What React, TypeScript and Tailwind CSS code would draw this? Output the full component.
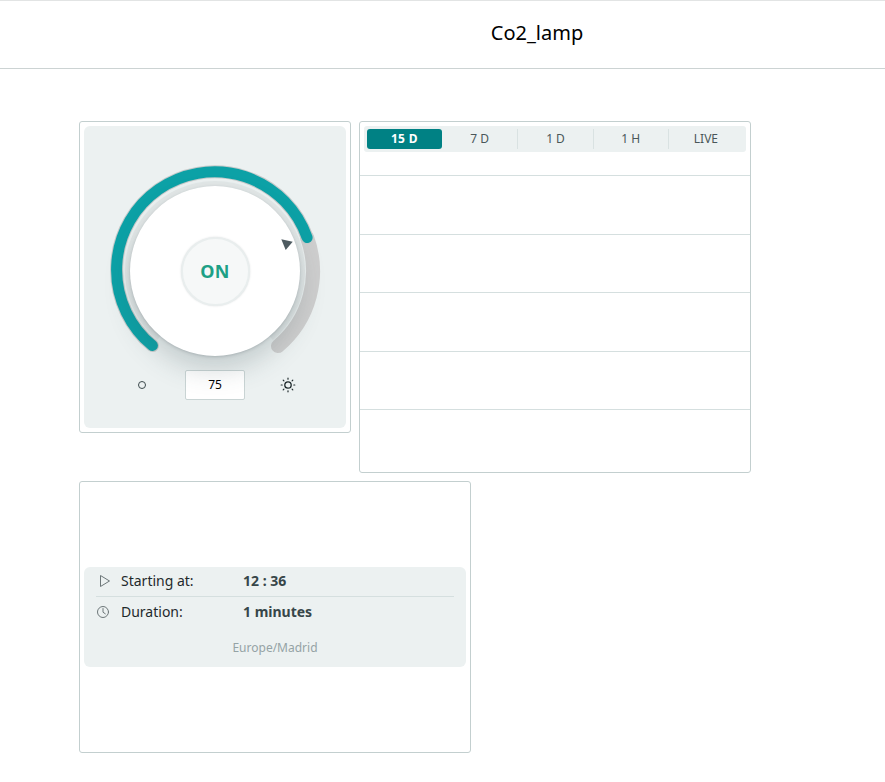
const ranges = ["15 D", "7 D", "1 D", "1 H", "LIVE"]

const Knob = () => {
    return (
        <div className="relative w-[214px] h-[206px]">
            <svg width="214" height="214" viewBox="0 0 214 214" className="absolute left-0 top-0" fill="none">
                <path d="M52 172.5A85.500 85.500 0 1 1 162 172.5" stroke="#e2e7e7" strokeWidth="9" />
                <path d="M199.1 73.5A98 98 0 0 1 170 182.1" stroke="#cecece" strokeWidth="14" strokeLinecap="round" />
                <path d="M44.4 181.6A98 98 0 1 1 199.1 73.5" stroke="#c6caca" strokeWidth="13" strokeLinecap="round" />
                <path d="M44.4 181.6A98 98 0 1 1 199.1 73.5" stroke="#0ca1a6" strokeWidth="11" strokeLinecap="round" />
            </svg>
            <div className="absolute left-[22px] top-[22px] w-[170px] h-[170px] rounded-full bg-white shadow-[0_1px_3px_rgba(70,85,90,0.25),0_14px_26px_rgba(60,80,85,0.22)] flex items-center justify-center">
                <div className="w-[69px] h-[69px] rounded-full bg-[#f6f8f8] border-2 border-[#e9eeee] shadow-[0_0_2px_rgba(70,85,90,0.2)] flex items-center justify-center">
                    <span className="text-lg font-bold tracking-[0.2px] text-[#1da086]">ON</span>
                </div>
            </div>
            <svg width="214" height="214" viewBox="0 0 214 214" className="absolute left-0 top-0" fill="none">
                <path d="M173.300 75.300L184.700 77.700L177.700 86Z" fill="#4e5b61" />
            </svg>
        </div>
    )
}

const Sun = () => (
    <svg width="16" height="16" viewBox="0 0 16 16" fill="none" stroke="#1f2a2c" strokeLinecap="round">
        <circle cx="8" cy="8" r="3.2" strokeWidth="1.3" />
        <path d="M8 1.2v1M8 13.800v1M1.200 8h1M13.800 8h1M3.200 3.200l.7.7M12.100 12.100l.7.7M3.200 12.800l.7-.7M12.100 3.900l.7-.7" strokeWidth="1.2" />
    </svg>
)

export default function App() {
    return (
        <div className="min-h-[782px] bg-white font-['Noto_Sans',sans-serif] text-[#1f2a2c]">
            <header className="h-[69px] border-t border-b border-t-[#e2e4e4] border-b-[#ccd3d3] pl-[189px] pb-[4px] flex items-center justify-center">
                <h1 className="text-xl text-black">Co2_lamp</h1>
            </header>

            <main className="pl-[79px] pt-[52px] flex flex-col gap-2">
                <div className="flex items-start gap-2">
                    <section className="w-[272px] h-[312px] border border-[#c3cfcf] rounded-[3px] p-1 bg-white">
                        <div className="h-full rounded-md bg-[#ecf1f1] pt-[38px] flex flex-col items-center">
                            <Knob />
                            <div className="w-full flex items-center pl-[54px]">
                                <span className="w-[8px] h-[8px] rounded-full border-[1.5px] border-[#3d4a4d]" />
                                <div className="ml-[39px] w-[60px] h-[30px] bg-white border border-[#c9d4d4] rounded-[2px] flex items-center justify-center text-xs text-black">75</div>
                                <div className="ml-[35px]">
                                    <Sun />
                                </div>
                            </div>
                        </div>
                    </section>

                    <section className="w-[392px] h-[352px] border border-[#c3cfcf] rounded-[3px] bg-white">
                        <div className="m-1 mb-0 h-[26px] rounded-[3px] bg-[#ecf1f1] px-[3px] py-[3px] flex text-xs text-[#4a5759]">
                            {ranges.map((r, i) => (
                                <div
                                    key={r}
                                    className={
                                        i === 0
                                            ? "w-[75px] rounded-[3px] bg-[#008184] text-white font-bold tracking-[0.3px] flex items-center justify-center"
                                            : i === 1
                                              ? "w-[76px] flex items-center justify-center"
                                              : "w-[75.5px] border-l border-[#d9e2e2] flex items-center justify-center"
                                    }
                                >
                                    {r}
                                </div>
                            ))}
                        </div>
                        <div className="h-[24px] border-b border-[#d5dfdf]" />
                        <div className="h-[59px] border-b border-[#d5dfdf]" />
                        <div className="h-[58px] border-b border-[#d5dfdf]" />
                        <div className="h-[59px] border-b border-[#d5dfdf]" />
                        <div className="h-[58px] border-b border-[#d5dfdf]" />
                    </section>
                </div>

                <section className="w-[392px] h-[272px] border border-[#c3cfcf] rounded-[3px] bg-white px-1 flex items-center">
                    <div className="w-full h-[100px] rounded-md bg-[#ecf1f1] px-3 text-sm">
                        <div className="h-[30px] pb-[2px] border-b border-[#d5dfdf] flex items-center">
                            <svg width="12" height="14" viewBox="0 0 12 14" fill="none" stroke="#6d7779" className="ml-[3px] mr-[10px]">
                                <path d="M1.5 1.5L10.5 7L1.5 12.5Z" />
                            </svg>
                            <span className="w-[122px]">Starting at:</span>
                            <span className="font-bold text-[#374649]">12 : 36</span>
                        </div>
                        <div className="h-[31px] pb-[2px] flex items-center">
                            <svg width="14" height="14" viewBox="0 0 14 14" fill="none" stroke="#6d7779" strokeLinecap="round" className="mr-[11px]">
                                <circle cx="7" cy="7" r="5.5" />
                                <path d="M7 3.5V7.2L9.3 8.8" />
                            </svg>
                            <span className="w-[122px]">Duration:</span>
                            <span className="font-bold text-[#374649]">1 minutes</span>
                        </div>
                        <p className="mt-[12px] text-xs text-center text-[#95a3a5]">Europe/Madrid</p>
                    </div>
                </section>
            </main>
        </div>
    )
}
